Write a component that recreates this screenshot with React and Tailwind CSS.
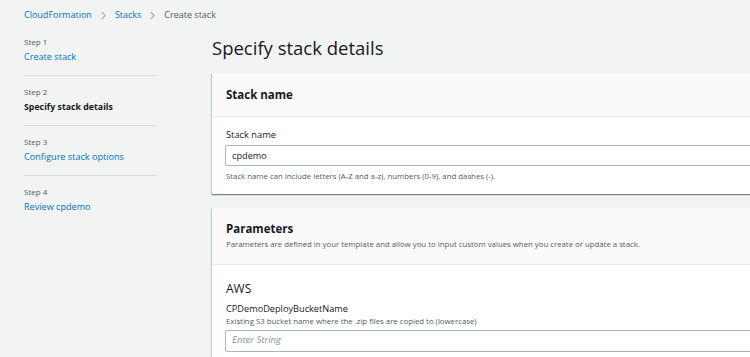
import { ChevronRight } from "lucide-react";

const steps = [
  { step: "Step 1", label: "Create stack", active: false },
  { step: "Step 2", label: "Specify stack details", active: true },
  { step: "Step 3", label: "Configure stack options", active: false },
  { step: "Step 4", label: "Review cpdemo", active: false },
];

const cardShadow =
  "shadow-[0_1px_1px_0_rgba(0,28,36,0.3),1px_1px_1px_0_rgba(0,28,36,0.15),-1px_1px_1px_0_rgba(0,28,36,0.15)]";

const App = () => {
  return (
    <div className="w-[750px] h-[357px] overflow-hidden bg-[#f2f3f3] text-[#16191f] font-['Open_Sans',sans-serif]">
      {/* breadcrumb */}
      <div className="h-[30px] flex items-center pl-[24px] text-[9px] leading-[12px]">
        <span className="text-[#0073bb]">CloudFormation</span>
        <ChevronRight size={13} strokeWidth={1.5} className="text-[#545b64] mx-[5px]" />
        <span className="text-[#0073bb]">Stacks</span>
        <ChevronRight size={13} strokeWidth={1.5} className="text-[#545b64] mx-[5px]" />
        <span className="text-[#545b64]">Create stack</span>
      </div>

      <div className="flex">
        {/* steps */}
        <div className="w-[133px] ml-[24px] shrink-0 mt-[6px]">
          {steps.map((s, i) => (
            <div
              key={s.step}
              className={
                i < steps.length - 1
                  ? "pb-[11px] mb-[10px] border-b border-[#d5dbdb]"
                  : ""
              }
            >
              <div className="text-[8px] leading-[12px] text-[#545b64]">{s.step}</div>
              <div
                className={
                  s.active
                    ? "mt-[2px] text-[8.8px] leading-[14px] font-bold text-[#16191f]"
                    : "mt-[2px] text-[9.1px] leading-[14px] text-[#0073bb]"
                }
              >
                {s.label}
              </div>
            </div>
          ))}
        </div>

        {/* main */}
        <div className="ml-[55px] w-[600px] shrink-0">
          <h1 className="mt-[6px] text-[18.5px] leading-[24px] font-normal text-[#16191f]">
            Specify stack details
          </h1>

          <div className={"mt-[13px] bg-white " + cardShadow}>
            <div className="h-[44px] flex items-center px-[14px] bg-[#fafafa] border-b border-[#eaeded]">
              <h2 className="text-[11.5px] font-bold">Stack name</h2>
            </div>
            <div className="pt-[11px] pb-[12px] pl-[14px] pr-[14px]">
              <div className="text-[9.3px] leading-[14px] font-medium">Stack name</div>
              <div className="mt-[3px] -ml-px h-[21px] border border-[#aab7b8] rounded-[2px] flex items-center px-[6px] text-[9.2px] bg-white">
                cpdemo
              </div>
              <div className="mt-[5px] text-[7.8px] leading-[11px] text-[#545b64]">
                Stack name can include letters (A-Z and a-z), numbers (0-9), and dashes (-).
              </div>
            </div>
          </div>

          <div className={"mt-[14px] bg-white " + cardShadow}>
            <div className="pt-[12px] pb-[14px] px-[14px] bg-[#fafafa] border-b border-[#eaeded]">
              <h2 className="text-[11.5px] leading-[18px] font-bold">Parameters</h2>
              <div className="mt-[0.5px] text-[7.8px] leading-[11px] text-[#545b64]">
                Parameters are defined in your template and allow you to input custom values when you create or update a stack.
              </div>
            </div>
            <div className="pt-[14px] px-[14px] pb-[14px]">
              <h3 className="text-[12px] leading-[20px] font-normal">AWS</h3>
              <div className="mt-[3px] text-[9.2px] leading-[14px]">CPDemoDeployBucketName</div>
              <div className="text-[7.8px] leading-[11px] text-[#545b64]">
                Existing S3 bucket name where the .zip files are copied to (lowercase)
              </div>
              <div className="mt-[3px] -ml-px h-[22px] border border-[#aab7b8] rounded-[2px] flex items-center px-[6px] text-[9.5px] italic text-[#879596] bg-white">
                Enter String
              </div>
            </div>
          </div>
        </div>
      </div>
    </div>
  );
};

export default App;
